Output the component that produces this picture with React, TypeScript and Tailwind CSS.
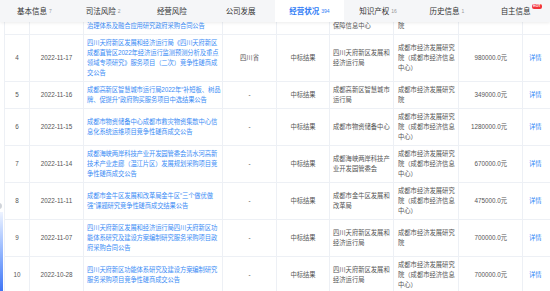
import React from 'react';

type Row = {
  no: string;
  date: string;
  title: string;
  region: string;
  result: string;
  buyer: string;
  winner: string;
  amount: string;
  link: string;
};

const tabs = [
  { label: '基本信息', count: '7' },
  { label: '司法风险', count: '2' },
  { label: '经营风险', count: '' },
  { label: '公司发展', count: '' },
  { label: '经营状况', count: '394', active: true },
  { label: '知识产权', count: '16' },
  { label: '历史信息', count: '1' },
  { label: '自主信息', count: '', hot: true },
];

const INSTITUTE = '成都市经济发展研究院（成都市经济信息中心）';

// first row is scrolled up under the tab strip; only its last line is left in view
const rows: Row[] = [
  {
    no: '',
    date: '',
    title: '治理体系及融合应用研究政府采购合同公告',
    region: '',
    result: '',
    buyer: '保障信息中心',
    winner: '院',
    amount: '',
    link: '',
  },
  {
    no: '4',
    date: '2022-11-17',
    title: '四川天府新区发展和经济运行局《四川天府新区成都直管区2022年经济运行监测预测分析及重点领域专项研究》服务项目（二次）竞争性磋商成交公告',
    region: '四川省',
    result: '中标结果',
    buyer: '四川天府新区发展和经济运行局',
    winner: INSTITUTE,
    amount: '980000.0元',
    link: '详情',
  },
  {
    no: '5',
    date: '2022-11-16',
    title: '成都高新区智慧城市运行局2022年“补短板、树品牌、促提升”政府购买服务项目中选结果公告',
    region: '-',
    result: '中标结果',
    buyer: '成都高新区智慧城市运行局',
    winner: '成都市经济发展研究院',
    amount: '349000.0元',
    link: '详情',
  },
  {
    no: '6',
    date: '2022-11-15',
    title: '成都市物资储备中心成都市救灾物资集散中心信息化系统运维项目竞争性磋商成交公告',
    region: '-',
    result: '中标结果',
    buyer: '成都市物资储备中心',
    winner: INSTITUTE,
    amount: '1280000.0元',
    link: '详情',
  },
  {
    no: '7',
    date: '2022-11-14',
    title: '成都海峡两岸科技产业开发园管委会清水河高新技术产业走廊（温江片区）发展规划采购项目竞争性磋商成交公告',
    region: '-',
    result: '中标结果',
    buyer: '成都海峡两岸科技产业开发园管委会',
    winner: INSTITUTE,
    amount: '670000.0元',
    link: '详情',
  },
  {
    no: '8',
    date: '2022-11-11',
    title: '成都市金牛区发展和改革局金牛区“三个做优做强”课题研究竞争性磋商成交结果公告',
    region: '-',
    result: '中标结果',
    buyer: '成都市金牛区发展和改革局',
    winner: INSTITUTE,
    amount: '475000.0元',
    link: '详情',
  },
  {
    no: '9',
    date: '2022-11-07',
    title: '四川天府新区发展和经济运行局四川天府新区功能体系研究及建设方案编制研究服务采购项目政府采购合同公告',
    region: '-',
    result: '中标结果',
    buyer: '四川天府新区发展和经济运行局',
    winner: '成都市经济发展研究院',
    amount: '700000.0元',
    link: '详情',
  },
  {
    no: '10',
    date: '2022-10-28',
    title: '四川天府新区功能体系研究及建设方案编制研究服务采购项目竞争性磋商成交公告',
    region: '-',
    result: '中标结果',
    buyer: '四川天府新区发展和经济运行局',
    winner: INSTITUTE,
    amount: '700000.0元',
    link: '详情',
  },
];

const cell = 'border border-[#edf0f5] py-[3px] px-[3px] align-middle leading-[10px]';

export default function App() {
  return (
    <div className="relative w-[550px] h-[291px] overflow-hidden bg-white font-['Liberation_Sans','Noto_Sans_CJK_SC',sans-serif] text-[6.3px] text-[#555]">
      {/* tab strip */}
      <div className="relative z-10 h-[22px] flex bg-[#f5f6f8] shadow-[0_1px_3px_rgba(0,0,0,0.08)]">
        {tabs.map((t) => (
          <div
            key={t.label}
            className={`relative flex-1 flex items-center justify-center gap-[2px] pt-[1px] ${
              t.active ? 'bg-white text-[#2f7cf6] font-bold' : 'text-[#333]'
            }`}
          >
            <span className="text-[7.5px]">{t.label}</span>
            {t.count && (
              <span className={`text-[5px] font-normal ${t.active ? 'text-[#2f7cf6]' : 'text-[#999]'}`}>{t.count}</span>
            )}
            {t.hot && (
              <span className="absolute top-[4px] right-[8px] px-[1.5px] rounded-[2px] bg-[#f2323a] text-white text-[3.5px] leading-[5px] font-bold">
                HOT
              </span>
            )}
          </div>
        ))}
      </div>

      <div className="h-[269px] overflow-hidden pl-[4px]">
        <table className="table-fixed border-collapse w-[574px] -mt-[5px]">
          <colgroup>
            <col className="w-[25px]" />
            <col className="w-[54px]" />
            <col className="w-[139px]" />
            <col className="w-[54px]" />
            <col className="w-[53px]" />
            <col className="w-[64px]" />
            <col className="w-[65px]" />
            <col className="w-[64px]" />
            <col className="w-[56px]" />
          </colgroup>
          <tbody>
            {rows.map((r, i) => (
              <tr key={i}>
                <td className={`${cell} text-center`}>{r.no}</td>
                <td className={`${cell} text-center`}>{r.date}</td>
                <td className={`${cell} pr-0 tracking-[-0.1px] text-[#3b8cf5]`}>{r.title}</td>
                <td className={`${cell} text-center`}>{r.region}</td>
                <td className={`${cell} text-center`}>{r.result}</td>
                <td className={`${cell} pr-0`}>{r.buyer}</td>
                <td className={`${cell} pl-[4px] pr-0`}>{r.winner}</td>
                <td className={`${cell} text-right pr-[15px]`}>{r.amount}</td>
                <td className={`${cell} pl-[6px] text-[#2f86f6]`}>{r.link}</td>
              </tr>
            ))}
          </tbody>
        </table>
      </div>

      {/* floating side handle at the left edge */}
      <div className="absolute left-[-4px] top-[203px] w-[6px] h-[6px] rounded-full bg-[#cfd3d9]" />
      <div className="absolute left-0 top-[212px] bottom-0 w-[3px] bg-gradient-to-b from-[#eef3ff] to-[#3f74f5]" />
    </div>
  );
}
